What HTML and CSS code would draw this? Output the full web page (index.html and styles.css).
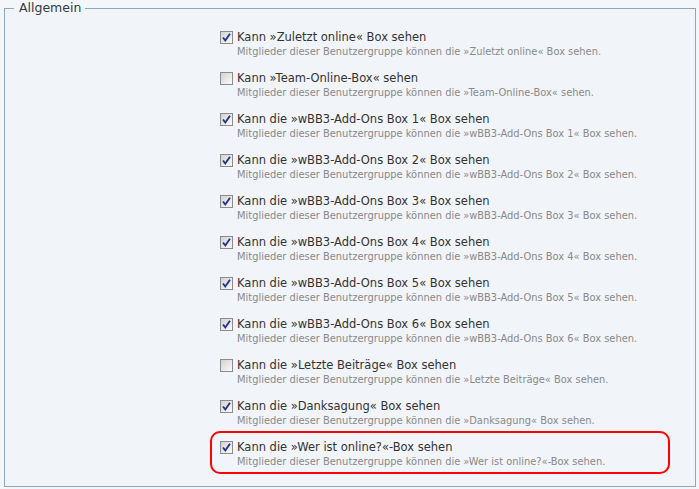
FILE: index.html
```html
<!DOCTYPE html>
<html lang="de">
<head>
<meta charset="utf-8">
<title>Allgemein</title>
<link rel="stylesheet" href="styles.css">
</head>
<body>
<fieldset class="group">
  <legend class="group-title">Allgemein</legend>
  <ul class="options">
    <li class="option">
      <div class="option-head"><span class="box checked"><svg viewBox="0 0 11 11" width="11" height="11"><path d="M2 5.5 L4.3 8.5 L9 1.8" /></svg></span><span class="label">Kann »Zuletzt online« Box sehen</span></div>
      <p class="desc">Mitglieder dieser Benutzergruppe können die »Zuletzt online« Box sehen.</p>
    </li>
    <li class="option">
      <div class="option-head"><span class="box"></span><span class="label">Kann »Team-Online-Box« sehen</span></div>
      <p class="desc">Mitglieder dieser Benutzergruppe können die »Team-Online-Box« sehen.</p>
    </li>
    <li class="option">
      <div class="option-head"><span class="box checked"><svg viewBox="0 0 11 11" width="11" height="11"><path d="M2 5.5 L4.3 8.5 L9 1.8" /></svg></span><span class="label">Kann die »wBB3-Add-Ons Box 1« Box sehen</span></div>
      <p class="desc">Mitglieder dieser Benutzergruppe können die »wBB3-Add-Ons Box 1« Box sehen.</p>
    </li>
    <li class="option">
      <div class="option-head"><span class="box checked"><svg viewBox="0 0 11 11" width="11" height="11"><path d="M2 5.5 L4.3 8.5 L9 1.8" /></svg></span><span class="label">Kann die »wBB3-Add-Ons Box 2« Box sehen</span></div>
      <p class="desc">Mitglieder dieser Benutzergruppe können die »wBB3-Add-Ons Box 2« Box sehen.</p>
    </li>
    <li class="option">
      <div class="option-head"><span class="box checked"><svg viewBox="0 0 11 11" width="11" height="11"><path d="M2 5.5 L4.3 8.5 L9 1.8" /></svg></span><span class="label">Kann die »wBB3-Add-Ons Box 3« Box sehen</span></div>
      <p class="desc">Mitglieder dieser Benutzergruppe können die »wBB3-Add-Ons Box 3« Box sehen.</p>
    </li>
    <li class="option">
      <div class="option-head"><span class="box checked"><svg viewBox="0 0 11 11" width="11" height="11"><path d="M2 5.5 L4.3 8.5 L9 1.8" /></svg></span><span class="label">Kann die »wBB3-Add-Ons Box 4« Box sehen</span></div>
      <p class="desc">Mitglieder dieser Benutzergruppe können die »wBB3-Add-Ons Box 4« Box sehen.</p>
    </li>
    <li class="option">
      <div class="option-head"><span class="box checked"><svg viewBox="0 0 11 11" width="11" height="11"><path d="M2 5.5 L4.3 8.5 L9 1.8" /></svg></span><span class="label">Kann die »wBB3-Add-Ons Box 5« Box sehen</span></div>
      <p class="desc">Mitglieder dieser Benutzergruppe können die »wBB3-Add-Ons Box 5« Box sehen.</p>
    </li>
    <li class="option">
      <div class="option-head"><span class="box checked"><svg viewBox="0 0 11 11" width="11" height="11"><path d="M2 5.5 L4.3 8.5 L9 1.8" /></svg></span><span class="label">Kann die »wBB3-Add-Ons Box 6« Box sehen</span></div>
      <p class="desc">Mitglieder dieser Benutzergruppe können die »wBB3-Add-Ons Box 6« Box sehen.</p>
    </li>
    <li class="option">
      <div class="option-head"><span class="box"></span><span class="label">Kann die »Letzte Beiträge« Box sehen</span></div>
      <p class="desc">Mitglieder dieser Benutzergruppe können die »Letzte Beiträge« Box sehen.</p>
    </li>
    <li class="option">
      <div class="option-head"><span class="box checked"><svg viewBox="0 0 11 11" width="11" height="11"><path d="M2 5.5 L4.3 8.5 L9 1.8" /></svg></span><span class="label">Kann die »Danksagung« Box sehen</span></div>
      <p class="desc">Mitglieder dieser Benutzergruppe können die »Danksagung« Box sehen.</p>
    </li>
    <li class="option highlight">
      <div class="option-head"><span class="box checked"><svg viewBox="0 0 11 11" width="11" height="11"><path d="M2 5.5 L4.3 8.5 L9 1.8" /></svg></span><span class="label">Kann die »Wer ist online?«-Box sehen</span></div>
      <p class="desc">Mitglieder dieser Benutzergruppe können die »Wer ist online?«-Box sehen.</p>
    </li>
  </ul>
</fieldset>
</body>
</html>
```

FILE: styles.css
```css
html, body {
  margin: 0;
  padding: 0;
  background: #f4f7fa;
}
body {
  padding: 0 3px 2px 4px;
  font-family: "DejaVu Sans", Verdana, sans-serif;
}
.group {
  margin: 0;
  padding: 0 0 17px 0;
  border: 1px solid #8ea7bb;
  background: #f1f4f9;
  min-width: 0;
}
.group-title {
  margin-left: 9px;
  padding: 0 4px 0 5px;
  font-size: 12.5px;
  line-height: 16px;
  color: #333b44;
}
.options {
  list-style: none;
  margin: 0;
  padding: 13px 0 0 215px;
}
.option {
  position: relative;
  height: 30px;
  margin-bottom: 11px;
}
.option:last-child {
  margin-bottom: 0;
}
.option-head {
  display: flex;
  align-items: center;
  gap: 4px;
  height: 16px;
}
.box {
  box-sizing: border-box;
  width: 13px;
  height: 13px;
  border: 1px solid #8c8c8c;
  background: linear-gradient(135deg, #d2d2d2, #fbfbfb);
  display: flex;
  align-items: center;
  justify-content: center;
  flex: none;
}
.box svg path {
  fill: none;
  stroke: #22348c;
  stroke-width: 1.9;
}
.label {
  font-size: 11.5px;
  line-height: 16px;
  color: #333;
  white-space: nowrap;
}
.desc {
  margin: 0 0 0 17px;
  font-size: 9.9px;
  line-height: 14px;
  color: #8a8a8a;
  white-space: nowrap;
}
.highlight::after {
  content: "";
  position: absolute;
  left: -10px;
  top: -8px;
  width: 460px;
  height: 43px;
  box-sizing: border-box;
  border: 2px solid #f00;
  border-radius: 10px;
}
```
